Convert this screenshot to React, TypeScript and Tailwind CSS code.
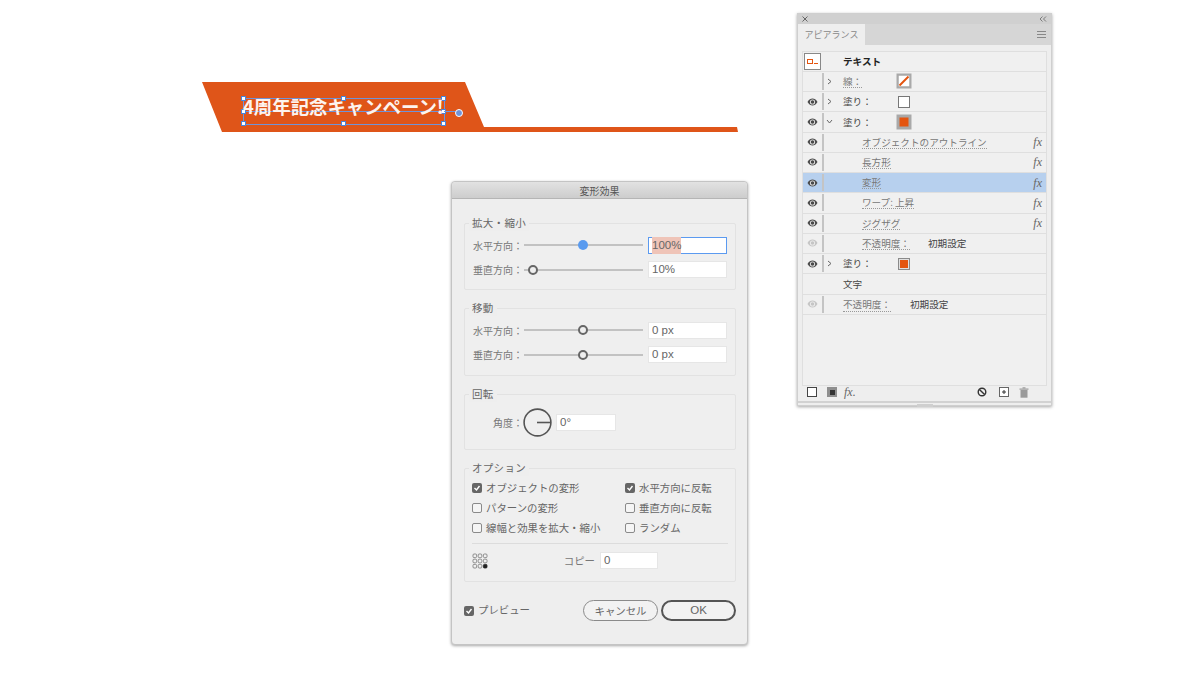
import React from 'react';

const Eye = ({ dim }: { dim?: boolean }) => (
  <svg width="11" height="8" viewBox="0 0 11 8" className={dim ? 'opacity-25' : ''}>
    <path d="M0.5 4C2 1.5 3.6 0.6 5.5 0.6S9 1.5 10.5 4C9 6.5 7.4 7.4 5.5 7.4S2 6.5 0.5 4Z" fill="#4a4a4a" />
    <circle cx="5.5" cy="4" r="2.6" fill="#eee" />
    <circle cx="5.5" cy="4" r="1.8" fill="#4a4a4a" />
  </svg>
);

const Chevron = ({ open }: { open?: boolean }) => (
  <svg width="7" height="7" viewBox="0 0 7 7" fill="none" stroke="#666" strokeWidth="1">
    {open ? <path d="M1 2l2.5 3L6 2" /> : <path d="M2 1l3 2.5L2 6" />}
  </svg>
);

const Fx = () => <span className="font-['Liberation_Serif',serif] italic text-[12px] text-[#666]">fx</span>;

const Swatch = ({ kind }: { kind: 'stroke' | 'white' | 'fill' | 'fillSmall' }) => {
  if (kind === 'white') return <div className="w-3 h-3 bg-white border border-[#777]" />;
  if (kind === 'fillSmall')
    return (
      <div className="w-3 h-3 bg-[#e0e0e0] border border-[#8a8a8a] flex items-center justify-center">
        <div className="w-2 h-2 bg-[#e4540f]" />
      </div>
    );
  return (
    <div className="w-[15px] h-[15px] bg-[#a9a9a9] flex items-center justify-center">
      {kind === 'fill' ? (
        <div className="w-[9px] h-[9px] bg-[#e4540f]" />
      ) : (
        <svg width="11" height="11" viewBox="0 0 11 11">
          <rect width="11" height="11" fill="#fff" />
          <path d="M1 10L10 1" stroke="#e4540f" strokeWidth="2" />
        </svg>
      )}
    </div>
  );
};

const Label = ({ children }: { children: React.ReactNode }) => (
  <span className="text-[#777] leading-[12px] border-b border-dotted border-[#999]">{children}</span>
);

type Row = {
  eye?: 'on' | 'dim';
  chevron?: 'open' | 'closed';
  label: string;
  sub?: boolean;
  link?: boolean;
  swatch?: 'stroke' | 'white' | 'fill' | 'fillSmall';
  fx?: boolean;
  value?: string;
  selected?: boolean;
};

const rows: Row[] = [
  { chevron: 'closed', label: '線：', link: true, swatch: 'stroke' },
  { eye: 'on', chevron: 'closed', label: '塗り：', swatch: 'white' },
  { eye: 'on', chevron: 'open', label: '塗り：', swatch: 'fill' },
  { eye: 'on', label: 'オブジェクトのアウトライン', sub: true, link: true, fx: true },
  { eye: 'on', label: '長方形', sub: true, link: true, fx: true },
  { eye: 'on', label: '変形', sub: true, link: true, fx: true, selected: true },
  { eye: 'on', label: 'ワープ: 上昇', sub: true, link: true, fx: true },
  { eye: 'on', label: 'ジグザグ', sub: true, link: true, fx: true },
  { eye: 'dim', label: '不透明度：', sub: true, link: true, value: '初期設定' },
  { eye: 'on', chevron: 'closed', label: '塗り：', swatch: 'fillSmall' },
];

const PanelRow = ({ row }: { row: Row }) => (
  <div className={`relative flex items-center h-[20.25px] border-b border-[#dfdfdf] text-[9.6px] ${row.selected ? 'bg-[#b7d0ee]' : 'bg-[#f0f0f0]'}`}>
    <div className="w-[19px] flex justify-center shrink-0">{row.eye && <Eye dim={row.eye === 'dim'} />}</div>
    <div className="w-[2px] h-[17px] bg-[#c4c4c4] shrink-0" />
    <div className="w-[19px] pl-[2px] shrink-0 flex items-center">
      {row.chevron && <Chevron open={row.chevron === 'open'} />}
    </div>
    <div className={`${row.sub ? 'ml-[19px]' : ''} flex items-center`}>
      {row.link ? <Label>{row.label}</Label> : <span className="text-[#444]">{row.label}</span>}
    </div>
    {row.swatch && (
      <div className="absolute left-[101px] top-1/2 -translate-x-1/2 -translate-y-1/2">
        <Swatch kind={row.swatch} />
      </div>
    )}
    {row.value && <span className="absolute left-[125px] text-[#444]">{row.value}</span>}
    {row.fx && <div className="absolute right-[4px]"><Fx /></div>}
  </div>
);

const AppearancePanel = () => (
  <div className="absolute left-[797px] top-[13px] w-[255px] h-[393px] bg-[#eeeeee] border border-[#cfcfcf] shadow-[0_1px_3px_rgba(0,0,0,0.35)] flex flex-col font-['Noto_Sans_CJK_JP',sans-serif]">
    <div className="h-[10px] bg-[#d0d0d0] flex items-center justify-between px-[4px] shrink-0">
      <svg width="6" height="6" viewBox="0 0 6 6" stroke="#666" strokeWidth="1"><path d="M0.5 0.5l5 5M5.5 0.5l-5 5" /></svg>
      <svg width="8" height="6" viewBox="0 0 8 6" fill="none" stroke="#666" strokeWidth="0.8"><path d="M3.5 0.5L1 3l2.5 2.5M7 0.5L4.5 3 7 5.5" /></svg>
    </div>
    <div className="h-[21px] bg-[#d6d6d6] flex items-stretch justify-between shrink-0">
      <div className="w-[67px] bg-[#eeeeee] text-[9px] text-[#888] flex items-center justify-center">アピアランス</div>
      <div className="flex flex-col justify-center gap-[2px] pr-[5px]">
        <div className="w-[9px] h-px bg-[#888]" />
        <div className="w-[9px] h-px bg-[#888]" />
        <div className="w-[9px] h-px bg-[#888]" />
      </div>
    </div>
    <div className="mx-1 mt-[5.5px] h-[335px] border border-[#dfdfdf] bg-[#f0f0f0] shrink-0">
      <div className="flex items-center h-[20.25px] border-b border-[#dfdfdf]">
        <div className="ml-[1px] w-[17px] h-[17px] bg-white border border-[#888] flex items-center pl-[2px] gap-[1px]">
          <div className="w-[6px] h-[5px] border border-[#e4540f]" />
          <div className="w-[4px] h-px bg-[#e4540f] mt-[4px]" />
        </div>
        <span className="ml-[22px] text-[9.6px] font-bold text-[#222]">テキスト</span>
      </div>
      {rows.map((r, i) => (
        <PanelRow key={i} row={r} />
      ))}
      <div className="flex items-center h-[20.25px] border-b border-[#dfdfdf] pl-[40px] text-[9.6px] text-[#444]">文字</div>
      <div className="relative flex items-center h-[20.25px] border-b border-[#dfdfdf] text-[9.6px]">
        <div className="w-[19px] flex justify-center shrink-0"><Eye dim /></div>
        <div className="w-[2px] h-[17px] bg-[#c4c4c4] shrink-0" />
        <div className="ml-[19px] text-[9.6px]"><Label>不透明度：</Label></div>
        <span className="absolute left-[107px] text-[#444]">初期設定</span>
      </div>
    </div>
    <div className="relative h-[13px] flex items-center shrink-0">
      <div className="h-[10px] w-[10px] ml-[9px] border-[1.5px] border-[#444] bg-white shrink-0" />
      <div className="ml-[10px] w-[10px] h-[10px] bg-[#8f8f8f] flex items-center justify-center shrink-0">
        <div className="w-[5px] h-[5px] bg-[#333]" />
      </div>
      <span className="ml-[7px] font-['Liberation_Serif',serif] italic text-[12px] text-[#666]">fx.</span>
      <svg className="absolute left-[179px]" width="10" height="10" viewBox="0 0 10 10" fill="none" stroke="#333" strokeWidth="1.4">
        <circle cx="5" cy="5" r="3.8" />
        <path d="M2.4 2.4l5.2 5.2" />
      </svg>
      <svg className="absolute left-[201px]" width="10" height="10" viewBox="0 0 10 10" fill="#fff" stroke="#666" strokeWidth="1">
        <rect x="0.5" y="0.5" width="9" height="9" />
        <path d="M5 3v4M3 5h4" stroke="#333" />
      </svg>
      <svg className="absolute left-[221px]" width="10" height="11" viewBox="0 0 10 11" fill="#9a9a9a">
        <rect x="0.5" y="1.5" width="9" height="1.2" />
        <rect x="3.5" y="0.3" width="3" height="1.2" />
        <rect x="1.5" y="3" width="7" height="7.7" />
      </svg>
    </div>
    <div className="mt-[2px] border-t-2 border-[#d2d2d2] flex-1 flex justify-center">
      <div className="w-4 h-[3px] mt-[1px] bg-[#cfcfcf]" />
    </div>
  </div>
);

const Group = ({ title, className, children }: { title: string; className: string; children: React.ReactNode }) => (
  <div className={`relative ml-[12px] mr-[11px] border border-[#e2e2e2] rounded-[2px] bg-[#efefef] ${className}`}>
    <span className="absolute left-[4px] -top-[9px] px-[3px] bg-[#eeeeee] text-[10.5px] leading-[16px] text-[#666] tracking-[0.3px]">{title}</span>
    {children}
  </div>
);

const SliderRow = ({ label, thumb, value, active }: { label: string; thumb: string; value: string; active?: boolean }) => (
  <div className="flex items-center h-[24.5px] pl-2">
    <span className="w-[51px] shrink-0 text-[10px] text-[#777] whitespace-nowrap">{label}</span>
    <div className="relative w-[119px] h-[2px] bg-[#c2c2c2] shrink-0">
      {active ? (
        <div className={`absolute ${thumb} -top-[4px] -ml-[6px] w-[10px] h-[10px] rounded-full bg-[#5a9bef]`} />
      ) : (
        <div className={`absolute ${thumb} -top-[4px] -ml-[6px] w-[10px] h-[10px] rounded-full bg-[#efefef] border-2 border-[#666]`} />
      )}
    </div>
    <div className={`ml-[5px] w-[79px] h-[17px] bg-white flex items-center pl-[3px] text-[11.5px] text-[#666] font-['Liberation_Sans',sans-serif] ${active ? 'border border-[#5b9af0]' : 'border border-[#e6e6e6]'}`}>
      {active ? <span className="bg-[#efc4b8]">{value}</span> : value}
    </div>
  </div>
);

const CheckBox = ({ on }: { on?: boolean }) => (
  <div className={`w-[10px] h-[10px] rounded-[2px] shrink-0 flex items-center justify-center ${on ? 'bg-[#666]' : 'bg-[#f5f5f5] border border-[#8a8a8a]'}`}>
    {on && (
      <svg width="8" height="8" viewBox="0 0 8 8" fill="none" stroke="#fff" strokeWidth="1.4">
        <path d="M1.5 4l2 2 3-4" />
      </svg>
    )}
  </div>
);

const Check = ({ on, label }: { on?: boolean; label: string }) => (
  <div className="flex items-center h-5 whitespace-nowrap">
    <CheckBox on={on} />
    <span className="ml-[4px] text-[10.4px] text-[#666]">{label}</span>
  </div>
);

const TransformDialog = () => (
  <div className="absolute left-[451px] top-[181px] w-[297px] h-[464px] bg-[#eeeeee] rounded-[4px] border border-[#c4c4c4] shadow-[0_1px_3px_rgba(0,0,0,0.35)] font-['Noto_Sans_CJK_JP',sans-serif]">
    <div className="h-[17px] rounded-t-[4px] bg-gradient-to-b from-[#e2e2e2] to-[#cdcdcd] border-b border-[#b5b5b5] flex items-center justify-center text-[10px] text-[#555]">変形効果</div>
    <Group title="拡大・縮小" className="mt-[24px] h-[67px] pt-[9px]">
      <SliderRow label="水平方向：" thumb="left-[50%]" value="100%" active />
      <SliderRow label="垂直方向：" thumb="left-[8%]" value="10%" />
    </Group>
    <Group title="移動" className="mt-[18px] h-[68px] pt-[9px]">
      <SliderRow label="水平方向：" thumb="left-[50%]" value="0 px" />
      <SliderRow label="垂直方向：" thumb="left-[50%]" value="0 px" />
    </Group>
    <Group title="回転" className="mt-[18px] h-[56px] flex items-center pl-[28px]">
      <span className="text-[10px] text-[#777] whitespace-nowrap">角度：</span>
      <svg width="29" height="29" viewBox="0 0 29 29" fill="none" stroke="#555" strokeWidth="1.6" className="mt-[1px] shrink-0">
        <circle cx="14.5" cy="14.5" r="13.4" />
        <path d="M14 14.5h14" />
      </svg>
      <div className="ml-[4px] w-[60px] h-[17px] mt-[1px] bg-white border border-[#e6e6e6] flex items-center pl-[3px] text-[11.5px] text-[#666] font-['Liberation_Sans',sans-serif]">0°</div>
    </Group>
    <Group title="オプション" className="mt-[18px] h-[114px] pt-[9px] px-[7px]">
      <div className="grid grid-cols-[153px_1fr]">
        <Check on label="オブジェクトの変形" />
        <Check on label="水平方向に反転" />
        <Check label="パターンの変形" />
        <Check label="垂直方向に反転" />
        <Check label="線幅と効果を拡大・縮小" />
        <Check label="ランダム" />
      </div>
      <div className="mt-[5px] h-px bg-[#dcdcdc]" />
      <div className="mt-2 flex items-center h-[17px] pr-[70px]">
        <svg width="16" height="16" viewBox="0 0 16 16" fill="none" className="shrink-0">
          {[0, 1, 2].flatMap((r) =>
            [0, 1, 2].map((c) => (
              <rect key={`${r}-${c}`} x={1 + c * 5.2} y={1 + r * 5.2} width="3.6" height="3.6" rx="1" fill={r === 2 && c === 2 ? '#222' : 'none'} stroke={r === 2 && c === 2 ? '#222' : '#777'} strokeWidth="0.8" />
            ))
          )}
        </svg>
        <span className="ml-auto text-[10.4px] text-[#777] mr-[5px]">コピー</span>
        <div className="w-[58px] h-[17px] bg-white border border-[#e6e6e6] flex items-center pl-[3px] text-[11.5px] text-[#666] font-['Liberation_Sans',sans-serif]">0</div>
      </div>
    </Group>
    <div className="mt-[18px] ml-[12px] mr-[11px] flex items-center h-[21px]">
      <CheckBox on />
      <span className="ml-[4px] mb-[1px] text-[10.4px] text-[#666]">プレビュー</span>
      <button className="ml-auto w-[75px] h-[21px] rounded-full bg-[#f2f2f2] border border-[#8a8a8a] text-[10.4px] text-[#666]">キャンセル</button>
      <button className="ml-[3px] w-[75px] h-[21px] rounded-full bg-[#f2f2f2] border-2 border-[#555] text-[11.5px] text-[#666] font-['Liberation_Sans',sans-serif]">OK</button>
    </div>
  </div>
);

const Handle = ({ className }: { className: string }) => (
  <div className={`absolute w-[5px] h-[5px] -ml-[3px] -mt-[3px] bg-white border border-[#4a84d8] ${className}`} />
);

const Banner = () => (
  <div className="absolute left-[202px] top-[82px] w-[537px] h-[50px]">
    <svg width="537" height="50" viewBox="0 0 537 50" className="absolute inset-0">
      <polygon points="0,0 263,0 282,45 535,45 536,50 20,50" fill="#df5519" />
    </svg>
    <div className="absolute left-[41px] top-[16px] w-[202px] h-[27px] border border-[#6f93d8]">
      <div className="absolute left-0 right-0 top-[12px] h-px bg-[#6f93d8]" />
      <Handle className="left-0 top-0" />
      <Handle className="left-1/2 top-0" />
      <Handle className="left-full top-0" />
      <Handle className="left-0 top-[13px]" />
      <Handle className="left-full top-[13px]" />
      <Handle className="left-0 top-full" />
      <Handle className="left-1/2 top-full" />
      <Handle className="left-full top-full" />
      <div className="absolute left-full top-[12px] w-[12px] h-px bg-[#6f93d8]" />
      <div className="absolute left-[211px] top-[10px] w-[6px] h-[6px] rounded-full bg-[#6f93d8] border border-white box-content" />
    </div>
    <span className="absolute left-[41px] top-[10px] text-[18.4px] leading-[28px] font-bold text-[#fdf3ee] whitespace-nowrap font-['Noto_Sans_CJK_JP',sans-serif]">4周年記念キャンペーン!</span>
  </div>
);

export default function App() {
  return (
    <div className="relative w-[1200px] h-[675px] bg-white overflow-hidden">
      <Banner />
      <TransformDialog />
      <AppearancePanel />
    </div>
  );
}
